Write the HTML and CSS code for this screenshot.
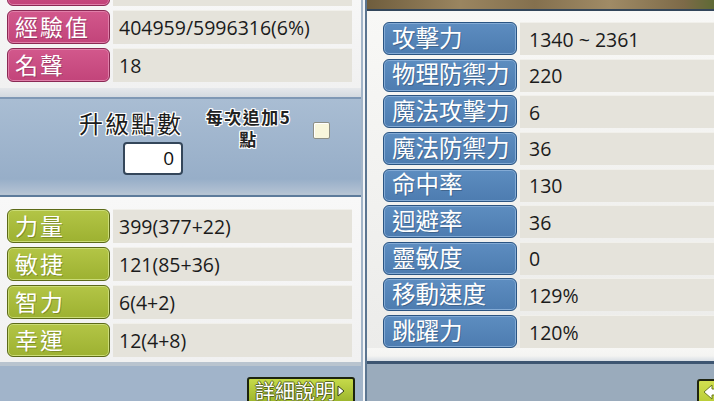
FILE: index.html
```html
<!DOCTYPE html>
<html lang="zh-Hant">
<head>
<meta charset="utf-8">
<title>角色能力值</title>
<link rel="stylesheet" href="styles.css">
</head>
<body>
<div class="window">
  <section class="left">
    <div class="top-rows">
      <div class="row"><div class="label pink"></div><div class="value"></div></div>
      <div class="row"><div class="label pink">經驗值</div><div class="value">404959/5996316(6%)</div></div>
      <div class="row"><div class="label pink">名聲</div><div class="value">18</div></div>
    </div>
    <div class="sep-top"></div>
    <div class="points">
      <div class="pts-group">
        <div class="pts-title">升級點數</div>
        <div class="pts-input">0</div>
      </div>
      <div class="pts-auto"><span class="pts-line">每次追加5</span><span class="pts-line">點</span></div>
      <div class="pts-check"></div>
    </div>
    <div class="sep-mid"></div>
    <div class="stat-rows">
      <div class="row"><div class="label green">力量</div><div class="value">399(377+22)</div></div>
      <div class="row"><div class="label green">敏捷</div><div class="value">121(85+36)</div></div>
      <div class="row"><div class="label green">智力</div><div class="value">6(4+2)</div></div>
      <div class="row"><div class="label green">幸運</div><div class="value">12(4+8)</div></div>
    </div>
    <div class="left-footer">
      <div class="detail-btn">詳細說明<svg class="arrow" width="8" height="12" viewBox="0 0 8 12"><polygon points="1,1 7,6 1,11" fill="#fff" stroke="#33401a" stroke-width="1"/></svg></div>
    </div>
  </section>
  <div class="divider"></div>
  <section class="right">
    <div class="photo"></div>
    <div class="right-rows">
      <div class="row"><div class="label blue">攻擊力</div><div class="value">1340 ~ 2361</div></div>
      <div class="row"><div class="label blue">物理防禦力</div><div class="value">220</div></div>
      <div class="row"><div class="label blue">魔法攻擊力</div><div class="value">6</div></div>
      <div class="row"><div class="label blue">魔法防禦力</div><div class="value">36</div></div>
      <div class="row"><div class="label blue">命中率</div><div class="value">130</div></div>
      <div class="row"><div class="label blue">迴避率</div><div class="value">36</div></div>
      <div class="row"><div class="label blue">靈敏度</div><div class="value">0</div></div>
      <div class="row"><div class="label blue">移動速度</div><div class="value">129%</div></div>
      <div class="row"><div class="label blue">跳躍力</div><div class="value">120%</div></div>
    </div>
    <div class="right-band"></div>
    <div class="right-footer">
      <div class="back-btn"><svg width="22" height="18" viewBox="0 0 22 18"><polygon points="2,9 10,2 10,6 20,6 20,12 10,12 10,16" fill="#fff" stroke="#6b7a20" stroke-width="1"/></svg></div>
    </div>
  </section>
</div>
</body>
</html>
```

FILE: styles.css
```css
html, body {
  margin: 0;
  padding: 0;
}
body {
  width: 714px;
  height: 401px;
  overflow: hidden;
  background: #9fb2c6;
}
.window {
  display: flex;
  width: 740px;
  height: 401px;
}

/* ---------- shared rows ---------- */
.row {
  display: flex;
  flex: none;
  height: 34px;
  gap: 3px;
}
.label {
  box-sizing: border-box;
  display: flex;
  align-items: center;
  padding-left: 7px;
  padding-bottom: 2px;
  border-radius: 6px;
  color: #fff;
  font-family: "Noto Sans CJK TC", "Noto Sans", sans-serif;
  font-size: 23px;
  letter-spacing: 2px;
  line-height: 1;
  white-space: nowrap;
  text-shadow: 1px 1px 0 rgba(0, 0, 0, 0.22);
}
.pink {
  width: 103px;
  background: linear-gradient(#d2588c, #c2447a);
  border: 1px solid #8a2954;
  box-shadow: inset 0 0 0 1px #e07fa9;
}
.green {
  width: 103px;
  background: linear-gradient(#b3c546, #9db131);
  border: 1px solid #5c6a18;
  box-shadow: inset 0 0 0 1px #cbdc78;
}
.blue {
  width: 134px;
  padding-left: 8px;
  font-size: 23.5px;
  letter-spacing: 0;
  background: linear-gradient(#5d8dc0, #4d7cb0);
  border: 1px solid #2a5482;
  box-shadow: inset 0 0 0 1px #84abd5;
}
.value {
  box-sizing: border-box;
  display: flex;
  align-items: center;
  padding-left: 6px;
  background: #e5e3db;
  border-top: 1px solid #f1f0eb;
  color: #1b1b1b;
  font-family: "Open Sans", "Liberation Sans", sans-serif;
  font-size: 19.5px;
  white-space: nowrap;
}

/* ---------- left panel ---------- */
.left {
  flex: none;
  width: 361px;
  display: flex;
  flex-direction: column;
}
.left .value {
  flex: 0 0 239px;
}
.top-rows {
  box-sizing: border-box;
  flex: none;
  height: 88px;
  overflow: hidden;
  display: flex;
  flex-direction: column;
  justify-content: flex-end;
  gap: 4px;
  padding: 0 0 6px 7px;
  background: linear-gradient(#f7f7f7, #f1f1f1);
}
.sep-top {
  flex: none;
  height: 9px;
  background: linear-gradient(#e6e8eb, #d3d9e0);
}
.points {
  box-sizing: border-box;
  flex: none;
  height: 96px;
  display: flex;
  align-items: flex-start;
  padding: 8px 0 0 76px;
  border-top: 2px solid #7f98b5;
  background: linear-gradient(#a9bdd3, #97aec8 85%, #b3c2d3);
}
.pts-group {
  width: 107px;
  margin-top: 2px;
  display: flex;
  flex-direction: column;
  align-items: flex-end;
}
.pts-title {
  font-family: "Noto Sans CJK TC", sans-serif;
  font-size: 24px;
  letter-spacing: 2px;
  line-height: 28px;
  color: #1c1c1c;
  white-space: nowrap;
  text-shadow: 1px 0 #fff, -1px 0 #fff, 0 1px #fff, 0 -1px #fff,
    1px 1px #fff, -1px -1px #fff, 1px -1px #fff, -1px 1px #fff;
}
.pts-input {
  box-sizing: border-box;
  margin-top: 5px;
  width: 60px;
  height: 33px;
  padding-right: 7px;
  border: 2px solid #34465a;
  border-radius: 4px;
  background: #fff;
  text-align: right;
  color: #111;
  font-family: "Open Sans", sans-serif;
  font-size: 19px;
  line-height: 29px;
}
.pts-auto {
  width: 93px;
  margin-left: 19px;
  margin-top: -1px;
  display: flex;
  flex-direction: column;
  align-items: center;
  gap: 1px;
  font-family: "Noto Sans CJK TC", sans-serif;
  font-weight: 700;
  font-size: 17px;
  letter-spacing: 1.5px;
  color: #222;
  white-space: nowrap;
  text-shadow: 1px 0 #fff, -1px 0 #fff, 0 1px #fff, 0 -1px #fff,
    1px 1px #fff, -1px -1px #fff, 1px -1px #fff, -1px 1px #fff;
}
.pts-line {
  display: block;
  height: 21px;
  line-height: 21px;
}
.pts-check {
  box-sizing: border-box;
  width: 17px;
  height: 17px;
  margin: 15px 0 0 18px;
  border: 1px solid #8d8f86;
  border-radius: 2px;
  background: #f8f6dc;
  box-shadow: inset 1px 1px 0 #fff;
}
.sep-mid {
  flex: none;
  height: 4px;
  background: linear-gradient(#b6c4d3 0 2px, #5d7b9b 2px 4px);
}
.stat-rows {
  box-sizing: border-box;
  flex: none;
  height: 165px;
  display: flex;
  flex-direction: column;
  gap: 4px;
  padding: 12px 0 0 7px;
  background: linear-gradient(#f8f8f8, #f1f1f1);
}
.left-footer {
  box-sizing: border-box;
  flex: 1;
  display: flex;
  justify-content: flex-end;
  align-items: flex-start;
  padding: 11px 6px 0 0;
  border-top: 4px solid #b9c4cf;
  background: #a1b4ca;
}
.detail-btn {
  box-sizing: border-box;
  width: 108px;
  height: 27px;
  display: flex;
  align-items: center;
  gap: 2px;
  padding-left: 6px;
  border: 2px solid #1c230f;
  border-radius: 3px;
  background: linear-gradient(#c6da4a, #9cb52c);
  color: #fff;
  font-family: "Noto Sans CJK TC", sans-serif;
  font-size: 20px;
  line-height: 1;
  white-space: nowrap;
  text-shadow: 1px 0 #55651b, -1px 0 #55651b, 0 1px #55651b, 0 -1px #55651b;
}
.arrow {
  flex: none;
}

/* ---------- divider ---------- */
.divider {
  flex: none;
  width: 6px;
  background: linear-gradient(to right, #a3b5c8 0 2px, #f3f5f7 2px 4px, #5b7590 4px 6px);
}

/* ---------- right panel ---------- */
.right {
  flex: none;
  width: 373px;
  display: flex;
  flex-direction: column;
}
.photo {
  flex: none;
  height: 9px;
  border-bottom: 2px solid #33465b;
  background: linear-gradient(90deg, #6f5d3d, #9a8560 25%, #84704e 45%, #a08b66 65%, #7d6a48 85%, #4f6a2c 97%);
}
.right-rows {
  box-sizing: border-box;
  flex: none;
  height: 337px;
  display: flex;
  flex-direction: column;
  gap: 3.625px;
  padding: 11px 0 0 16px;
  background: linear-gradient(#f8f8f6, #ececea);
}
.right .row {
  height: 33px;
}
.right .value {
  flex: 1;
  padding-left: 9px;
}
.right-band {
  flex: none;
  height: 13px;
  background: linear-gradient(#f7f7f5, #f4f4f2 60%, #d9dfe5);
}
.right-footer {
  box-sizing: border-box;
  flex: 1;
  display: flex;
  justify-content: flex-end;
  align-items: flex-start;
  padding: 15px 11px 0 0;
  border-top: 3px solid #3d5571;
  background: #9aabbc;
}
.back-btn {
  box-sizing: border-box;
  width: 32px;
  height: 26px;
  display: flex;
  align-items: center;
  justify-content: center;
  border: 2px solid #1f2410;
  border-radius: 3px;
  background: linear-gradient(#d2e050, #b8cc36);
}
```
